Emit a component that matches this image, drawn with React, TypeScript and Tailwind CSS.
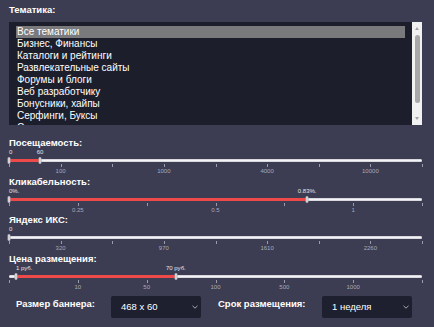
import React from 'react';

const topics = [
  'Все тематики',
  'Бизнес, Финансы',
  'Каталоги и рейтинги',
  'Развлекательные сайты',
  'Форумы и блоги',
  'Веб разработчику',
  'Бонусники, хайпы',
  'Серфинги, Буксы',
  'Социальные сети, мессенджеры',
];

type Handle = { pos: number; text?: string };

type SliderProps = {
  label: string;
  intervals: number;
  tickLabels: { i: number; text: string }[];
  handles: Handle[];
  range?: [number, number];
  tail?: string;
};

const Slider: React.FC<SliderProps> = ({ label, intervals, tickLabels, handles, range, tail = 'h-[9px]' }) => {
  const ticks = Array.from({ length: intervals + 1 }, (_, i) => (i / intervals) * 100);
  return (
    <section className="flex flex-col">
      <h3 className="text-[9.5px] font-bold leading-[12px] text-white">{label}</h3>
      <div className="relative h-[8px]">
        {handles.map((h, i) =>
          h.text ? (
            <span
              key={i}
              className={`absolute top-0 text-[6px] leading-[7px] whitespace-nowrap text-[#e4e4ea] ${h.pos < 2 ? '' : '-translate-x-1/2'}`}
              style={{ left: `${h.pos}%` }}
            >
              {h.text}
            </span>
          ) : null
        )}
      </div>
      <div className="relative h-[7px]">
        <div className="absolute left-0 right-0 top-[2px] h-[3px] rounded-full bg-[#f3f3f5] border-y border-[#d8d8de]" />
        {range && (
          <div
            className="absolute top-[2px] h-[3px] bg-[#ee4a4a]"
            style={{ left: `${range[0]}%`, width: `${range[1] - range[0]}%` }}
          />
        )}
        {handles.map((h, i) => (
          <div
            key={i}
            className="absolute top-0 h-[7px] w-[3px] -translate-x-1/2 rounded-[1px] bg-white border border-[#a5a5ad]"
            style={{ left: `${h.pos}%` }}
          />
        ))}
      </div>
      <div className="relative h-[3px]">
        {ticks.map((t, i) => (
          <div key={i} className="absolute top-0 h-[3px] w-px bg-[#9a9bab]" style={{ left: `${t}%` }} />
        ))}
      </div>
      <div className={`relative ${tail}`}>
        {tickLabels.map((l) => (
          <span
            key={l.i}
            className="absolute top-0 -translate-x-1/2 text-[6px] leading-[9px] text-[#a8a9b8]"
            style={{ left: `${(l.i / intervals) * 100}%` }}
          >
            {l.text}
          </span>
        ))}
      </div>
    </section>
  );
};

const Chevron = () => (
  <svg width="6" height="4" viewBox="0 0 6 4" className="shrink-0">
    <polyline points="0.5,0.8 3,3.2 5.5,0.8" fill="none" stroke="#b8b8c4" strokeWidth="0.9" />
  </svg>
);

const Select: React.FC<{ value: string }> = ({ value }) => (
  <div className="flex h-[22px] w-[90px] items-center justify-between rounded-[2px] bg-[#1e1f2f] pl-[10px] pr-[3px]">
    <span className="text-[9.5px] text-white">{value}</span>
    <Chevron />
  </div>
);

export default function App() {
  return (
    <div
      className="h-[327px] w-[434px] overflow-hidden bg-[#3c3d53] pl-[9px] pr-[12px] pt-[4px]"
      style={{ fontFamily: '"Liberation Sans", Arial, sans-serif' }}
    >
      <h3 className="text-[9.5px] font-bold leading-[12px] text-white">Тематика:</h3>

      <div className="mt-[6px] flex h-[103px] overflow-hidden bg-[#1d1e2c]">
        <ul className="flex-1 overflow-hidden px-[7px] pt-[4px]">
          {topics.map((t, i) => (
            <li
              key={t}
              className={`h-[12px] pl-[1px] text-[10px] leading-[12px] whitespace-nowrap text-white ${i === 0 ? 'bg-[#7a7a7c]' : ''}`}
            >
              {t}
            </li>
          ))}
        </ul>
        <div className="flex w-[10px] flex-col items-center bg-[#f1f1f1]">
          <span className="mt-[5px] h-0 w-0 border-x-[2px] border-b-[3px] border-x-transparent border-b-[#a3a3a3]" />
          <div className="mt-[5px] h-[68px] w-[5px] rounded-full bg-[#a8a8a8]" />
          <span className="mt-auto mb-[5px] h-0 w-0 border-x-[2px] border-t-[3px] border-x-transparent border-t-[#a3a3a3]" />
        </div>
      </div>

      <div className="mt-[12px] flex flex-col">
        <Slider
          label="Посещаемость:"
          intervals={8}
          tickLabels={[
            { i: 1, text: '100' },
            { i: 3, text: '1000' },
            { i: 5, text: '4000' },
            { i: 7, text: '10000' },
          ]}
          handles={[
            { pos: 0, text: '0' },
            { pos: 7.5, text: '60' },
          ]}
          range={[0, 7.5]}
        />
        <Slider
          label="Кликабельность:"
          intervals={6}
          tickLabels={[
            { i: 1, text: '0.25' },
            { i: 3, text: '0.5' },
            { i: 5, text: '1' },
          ]}
          handles={[
            { pos: 0, text: '0%.' },
            { pos: 72.2, text: '0.83%.' },
          ]}
          range={[0, 72.2]}
          tail="h-[8px]"
        />
        <Slider
          label="Яндекс ИКС:"
          intervals={8}
          tickLabels={[
            { i: 1, text: '320' },
            { i: 3, text: '970' },
            { i: 5, text: '1610' },
            { i: 7, text: '2260' },
          ]}
          handles={[{ pos: 0, text: '0' }]}
        />
        <Slider
          label="Цена размещения:"
          intervals={6}
          tickLabels={[
            { i: 1, text: '10' },
            { i: 2, text: '50' },
            { i: 3, text: '100' },
            { i: 4, text: '500' },
            { i: 5, text: '1000' },
          ]}
          handles={[
            { pos: 1.7, text: '1 руб.' },
            { pos: 40.4, text: '70 руб.' },
          ]}
          range={[1.7, 40.4]}
        />
      </div>

      <div className="mt-[4px] flex items-start pl-[7px]">
        <span className="w-[95px] pt-[2px] text-[9.5px] font-bold leading-[12px] text-white">Размер баннера:</span>
        <Select value="468 x 60" />
        <span className="ml-[17px] w-[104px] pt-[2px] text-[9.5px] font-bold leading-[12px] text-white">
          Срок размещения:
        </span>
        <Select value="1 неделя" />
      </div>
    </div>
  );
}
